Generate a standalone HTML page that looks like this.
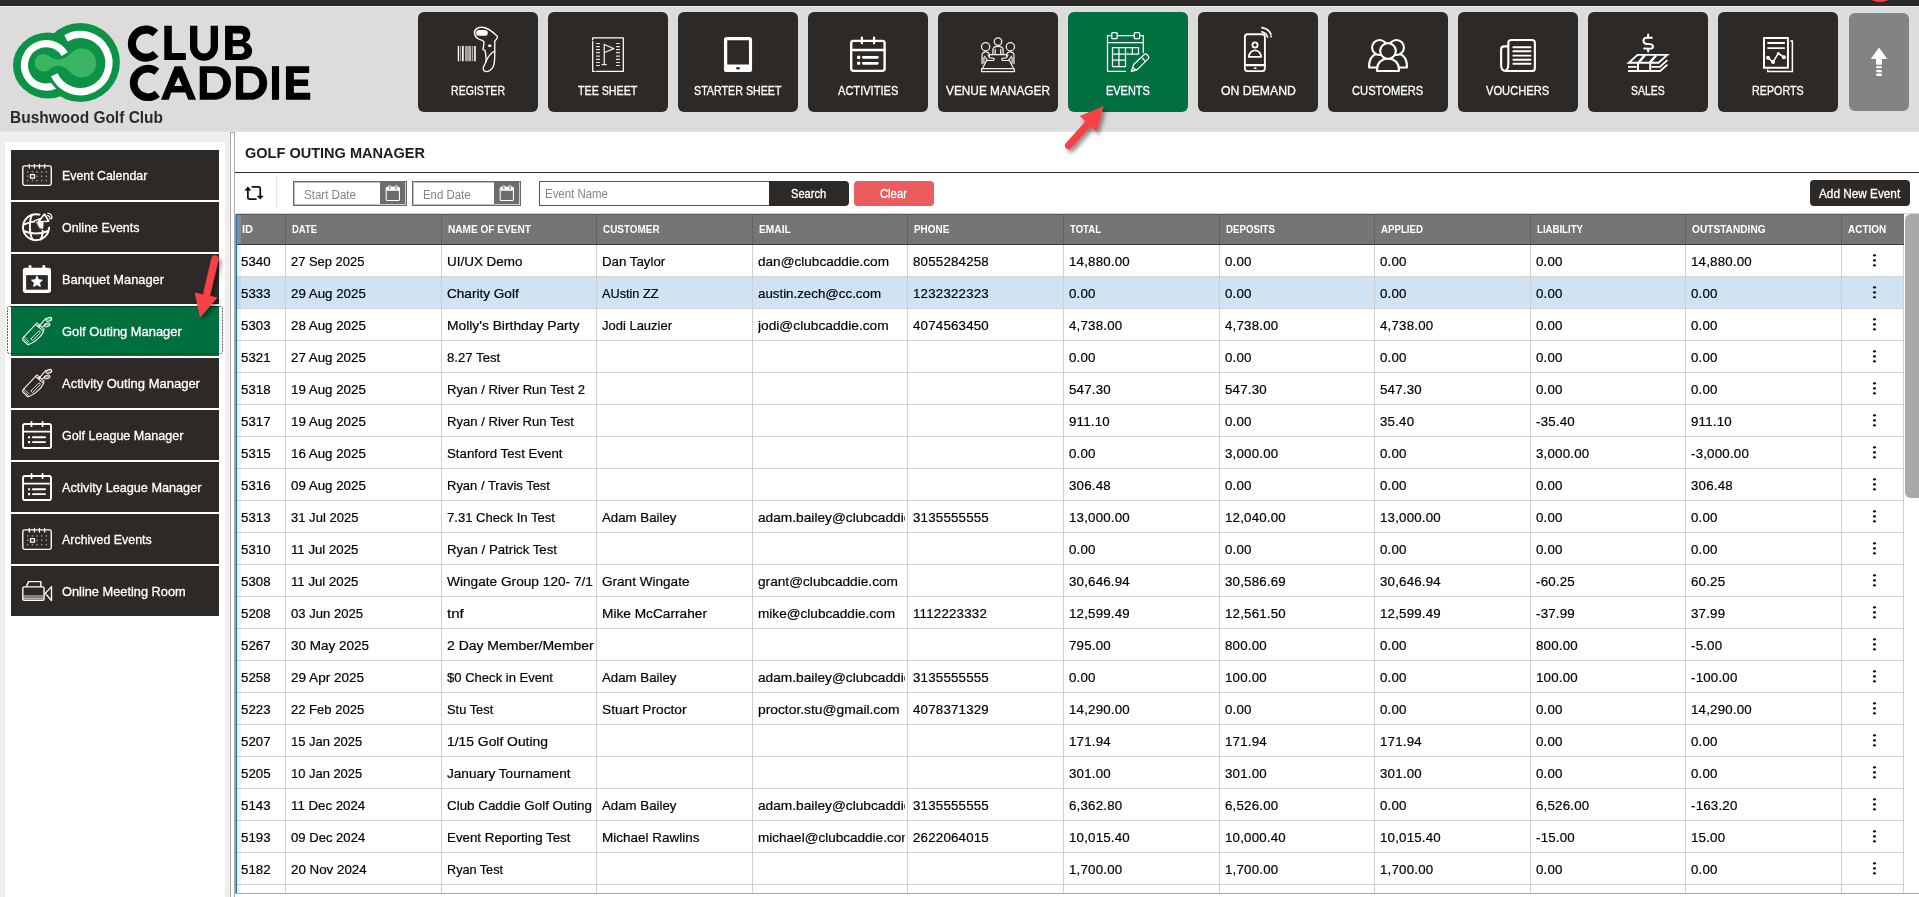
<!DOCTYPE html><html><head><meta charset="utf-8"><title>Golf Outing Manager</title><style>
*{box-sizing:border-box;margin:0;padding:0}
html,body{width:1919px;height:897px;overflow:hidden;background:#fff;font-family:"Liberation Sans",sans-serif;}
body{position:relative}
.abs{position:absolute}
#topbar{left:0;top:0;width:1919px;height:6px;background:#2d2926}
#topline{left:0;top:6px;width:1919px;height:1px;background:#ebebeb}
#hdr{left:0;top:7px;width:1919px;height:125px;background:#dcdcdc}
#reddot{left:1870.2px;top:-8.3px;width:20px;height:10.6px;border-radius:50%;background:#f53b40}
.nb{position:absolute;top:12px;width:120px;height:100px;background:#2d2926;border-radius:6px;color:#fff}
.nb.act{background:#007041}
.nb .lb{position:absolute;left:0;width:120px;top:83px;text-align:center;font-size:12.5px;line-height:14px;white-space:nowrap}
.nb svg{position:absolute}
#upbtn{left:1849px;top:13px;width:60px;height:98px;background:#838383;border-radius:6px}
#club{left:10px;top:108px;font-weight:bold;font-size:14.6px;line-height:18px;color:#2d2926;white-space:nowrap}
#side{left:0;top:132px;width:230px;height:765px;background:#efeeec}
#sidepanel{left:5px;top:142px;width:220px;height:755px;background:#fff}
.si{position:absolute;left:11px;width:208px;height:50px;background:#2d2926;color:#fff}
.si.act{background:#006f3f}
.si .t{position:absolute;left:51px;top:17px;font-size:13px;line-height:16px;white-space:nowrap}
.si svg{position:absolute}

#spl{left:230px;top:132px;width:5px;height:765px;background:#fff;border-left:1px solid #ababab;border-right:1px solid #ababab;border-top:1px solid #ababab}
#title{left:245px;top:143px;font-weight:bold;font-size:14.6px;line-height:18px;color:#1f1b18;white-space:nowrap}
#tline{left:235px;top:172px;width:1684px;height:1px;background:#2d2926}
#tsep{left:276px;top:177px;width:1px;height:30px;background:#e2e2e2}
.inp{position:absolute;height:25px;border:1px solid #686868;background:#fff;box-shadow:inset 0 0 0 1px rgba(104,104,104,0.42)}
.btn{position:absolute}
#tbl{left:235px;top:213px;width:1669px;height:681px}
.hc{position:absolute;top:216px;font-weight:bold;font-size:11px;line-height:14px;color:#fff;white-space:nowrap;height:28px;padding-top:6px}
.row{position:absolute;left:237px;width:1667px;height:32px;border-bottom:1px solid #d6d6d6}
.row.hl{background:#cfe3f3}
.c{position:absolute;top:0;height:31px;font-size:13.3px;line-height:33px;color:#000;-webkit-text-stroke:0.2px #000;white-space:nowrap;overflow:hidden}
.c.tx{letter-spacing:0.15px}
.c.dt{letter-spacing:-0.2px}
.c.nm{letter-spacing:0.05px}
.c.nu{letter-spacing:0.2px}
.vl{position:absolute;top:245px;width:1px;height:648px;background:#d0d0d0}
.hvl{position:absolute;top:215px;width:1px;height:29px;background:#636363}
.dots{position:absolute;left:1872px;width:3px}
.dots i{display:block;width:3px;height:2px;background:#111;border-radius:1px;margin-bottom:3px}
#hdrline{left:0;top:131px;width:1919px;height:1px;background:#e4e4e4}
.calb{top:182px;width:26px;height:23px;background:#6d6d6d;border-right:1px solid #cfcfcf;border-bottom:1px solid #cfcfcf}
.sx{display:inline-block;transform-origin:0 50%;white-space:nowrap}

</style></head><body>
<div class="abs" id="hdr"></div><div class="abs" id="hdrline"></div><div class="abs" id="topbar"></div><div class="abs" id="topline"></div><div class="abs" id="reddot"></div>

<svg class="abs" style="left:0;top:0" width="330" height="132" viewBox="0 0 330 132">
<ellipse cx="48" cy="65.5" rx="35" ry="33" fill="#0c9347"/>
<circle cx="80.4" cy="62.4" r="39.5" fill="#0c9347"/>
<path d="M64.7 54.1 A21.7 21.7 0 1 0 55.5 84.9" fill="none" stroke="#fff" stroke-width="7.2"/>
<path d="M68.2 37.1 A28.6 28.6 0 1 1 54.3 74.8" fill="none" stroke="#0c9347" stroke-width="13.5"/>
<path d="M66.0 38.3 A28.6 28.6 0 1 1 54.3 74.8" fill="none" stroke="#fff" stroke-width="7.3"/>
<circle cx="43.4" cy="62.7" r="8.8" fill="#3bb563"/>
<circle cx="81.7" cy="62.9" r="14.5" fill="#3bb563"/>
<path d="M48 55.2 Q53 59.5 58.9 59.6 Q64 59.5 70.5 53.5 L70.5 72.3 Q64 66 58.9 65.8 Q53 66 48 70.2 Z" fill="#3bb563"/>
<g transform="translate(120 18) scale(0.104221)" fill="#000">
<path d="M340 147 A135 135 0 1 0 343 343" fill="none" stroke="#000" stroke-width="77"/>
<path d="M425 75 L497 75 L497 335 L632 335 L632 403 L425 403 Z"/>
<path d="M707 75 L707 276 A99 99 0 0 0 905 276 L905 75" fill="none" stroke="#000" stroke-width="70"/>
<path fill-rule="evenodd" d="M1008 75 L1160 75 C1215 75 1250 110 1250 160 C1250 195 1230 222 1200 235 C1245 248 1268 280 1268 315 C1268 370 1225 403 1165 403 L1008 403 Z M1082 148 L1150 148 C1170 148 1182 160 1182 179 C1182 198 1170 210 1150 210 L1082 210 Z M1082 272 L1160 272 C1182 272 1195 288 1195 308 C1195 330 1182 345 1160 345 L1082 345 Z"/>
<path d="M353.6 516.1 A137 137 0 1 0 358.4 726.9" fill="none" stroke="#000" stroke-width="74"/>
<path fill-rule="evenodd" d="M525 462 L597 462 L730 785 L655 785 L628 715 L492 715 L468 785 L393 785 Z M560 565 L597 652 L520 652 Z"/>
<path fill-rule="evenodd" d="M765 462 L900 462 C1000 462 1065 530 1065 623 C1065 717 1000 785 900 785 L765 785 Z M835 528 L895 528 C955 528 990 568 990 623 C990 680 955 718 895 718 L835 718 Z"/>
<path fill-rule="evenodd" transform="translate(347 0)" d="M765 462 L900 462 C1000 462 1065 530 1065 623 C1065 717 1000 785 900 785 L765 785 Z M835 528 L895 528 C955 528 990 568 990 623 C990 680 955 718 895 718 L835 718 Z"/>
<rect x="1458" y="462" width="68" height="323"/>
<path d="M1592 462 L1815 462 L1815 528 L1668 528 L1668 590 L1805 590 L1805 652 L1668 652 L1668 718 L1825 718 L1825 785 L1592 785 Z"/>
</g>
</svg>

<div id="club" style="position:absolute;left:10.40px;top:107.86px;font-size:16.00px;line-height:20px;height:20px;white-space:nowrap;color:#2d2926;transform-origin:0 0;transform:scaleX(0.9672);font-weight:bold;">Bushwood Golf Club</div>
<div class="nb" style="left:418px"><svg style="left:0;top:8px" width="120" height="56" viewBox="0 0 1920 896" fill="none" stroke="#fff" stroke-linecap="round" stroke-linejoin="round" >
<g stroke="none">
<rect x="636" y="415" width="22" height="245" fill="#fff"/>
<rect x="672" y="415" width="14" height="245" fill="#a9a7a5"/>
<rect x="703" y="415" width="28" height="245" fill="#fff"/>
<rect x="752" y="415" width="44" height="245" fill="#a9a7a5"/>
<rect x="796" y="415" width="14" height="245" fill="#c9c7c5"/>
<rect x="812" y="415" width="36" height="245" fill="#b5b3b1"/>
<rect x="860" y="415" width="20" height="245" fill="#a9a7a5"/>
<rect x="894" y="415" width="34" height="245" fill="#d5d3d1"/>
</g>
<path stroke-width="22" d="M905 215 C895 150 950 118 1010 116 C1100 114 1180 170 1270 262 C1282 278 1262 300 1228 340 L1228 500 C1230 600 1225 690 1205 745 C1180 800 1120 830 1085 826 C1040 815 1030 770 1060 725 C1085 690 1095 650 1090 620 L1075 492 L1040 470 C1050 420 1062 380 1052 345 C1040 318 1000 322 960 300 C930 282 910 255 905 215 Z"/>
<path stroke-width="20" d="M1222 500 C1150 540 1110 610 1088 665"/>
<rect x="930" y="160" width="186" height="92" rx="46" fill="#fff" stroke="none"/>
<ellipse cx="1148" cy="412" rx="30" ry="19" fill="#fff" stroke="none"/>
</svg><div id="nl0" style="position:absolute;left:32.95px;top:69.33px;font-size:12.90px;line-height:20px;height:20px;white-space:nowrap;color:#fff;transform-origin:0 0;transform:scaleX(0.8204);-webkit-text-stroke:0.30px #fff;">REGISTER</div></div>
<div class="nb" style="left:548px"><svg style="left:0;top:8px" width="120" height="56" viewBox="0 0 1920 896" fill="none" stroke="#fff" stroke-linecap="round" stroke-linejoin="round" >
<path stroke-width="20" d="M715 315 L715 285 L1205 285 L1205 822 L770 822 M745 822 L715 822 L715 342"/>
<g stroke-width="18" stroke="#e6e4e2">
<path d="M776 375 L824 375 M1096 375 L1144 375"/><path d="M776 425 L824 425 M1096 425 L1144 425"/><path d="M776 473 L824 473 M1096 473 L1144 473"/><path d="M776 522 L824 522 M1096 522 L1144 522"/><path d="M776 577 L824 577 M1096 577 L1144 577"/><path d="M776 630 L824 630 M1096 630 L1144 630"/><path d="M776 680 L824 680 M1096 680 L1144 680"/><path d="M776 728 L824 728 M1096 728 L1144 728"/>
</g>
<path stroke-width="20" stroke="#f0eeec" d="M900 388 L900 708 M866 712 L934 712 M902 392 L1052 458 L906 520"/>
</svg><div id="nl1" style="position:absolute;left:30.30px;top:69.33px;font-size:12.90px;line-height:20px;height:20px;white-space:nowrap;color:#fff;transform-origin:0 0;transform:scaleX(0.8286);-webkit-text-stroke:0.30px #fff;">TEE SHEET</div></div>
<div class="nb" style="left:678px"><svg style="left:0;top:8px" width="120" height="56" viewBox="0 0 1920 896" fill="none" stroke="#fff" stroke-linecap="round" stroke-linejoin="round" >
<rect x="735" y="270" width="450" height="562" rx="42" fill="#fff" stroke="none"/>
<rect x="788" y="322" width="347" height="390" rx="8" fill="#2d2926" stroke="none"/>
<ellipse cx="960" cy="773" rx="30" ry="20" fill="#2d2926" stroke="none"/>
</svg><div id="nl2" style="position:absolute;left:16.20px;top:69.33px;font-size:12.90px;line-height:20px;height:20px;white-space:nowrap;color:#fff;transform-origin:0 0;transform:scaleX(0.8294);-webkit-text-stroke:0.30px #fff;">STARTER SHEET</div></div>
<div class="nb" style="left:808px"><svg style="left:0;top:8px" width="120" height="56" viewBox="0 0 1920 896" fill="none" stroke="#fff" stroke-linecap="round" stroke-linejoin="round" >
<rect x="691" y="334" width="535" height="479" rx="36" stroke-width="38"/>
<path stroke-width="38" d="M691 480 L1226 480"/>
<path stroke-width="36" d="M862 282 L862 372 M1057 282 L1057 372"/>
<rect x="785" y="572" width="50" height="50" rx="6" fill="#fff" stroke="none"/>
<rect x="785" y="667" width="50" height="50" rx="6" fill="#fff" stroke="none"/>
<path stroke-width="44" d="M885 597 L1110 597 M885 692 L1110 692"/>
</svg><div id="nl3" style="position:absolute;left:29.85px;top:69.33px;font-size:12.90px;line-height:20px;height:20px;white-space:nowrap;color:#fff;transform-origin:0 0;transform:scaleX(0.8585);-webkit-text-stroke:0.30px #fff;">ACTIVITIES</div></div>
<div class="nb" style="left:938px"><svg style="left:0;top:8px" width="120" height="56" viewBox="0 0 1920 896" fill="none" stroke="#fff" stroke-linecap="round" stroke-linejoin="round" >
<g stroke-width="20" stroke="#f2f0ee">
<circle cx="960" cy="345" r="60"/>
<circle cx="762" cy="428" r="66"/>
<circle cx="1158" cy="428" r="66"/>
<path d="M878 545 L878 478 C878 440 905 420 960 420 C1015 420 1042 440 1042 478 L1042 545"/>
<path d="M915 545 L915 470 M1003 545 L1003 470"/>
<path d="M830 552 L1090 552 L1105 585 M830 552 L815 585"/>
<path d="M780 645 L697 800 L697 826 L1223 826 L1223 800 L1140 645"/>
<path d="M700 778 L1220 778"/>
<path d="M705 700 L705 560 C705 520 730 508 770 508 C800 508 812 525 825 552"/>
<path d="M1215 700 L1215 560 C1215 520 1190 508 1150 508 C1120 508 1108 525 1095 552"/>
<path d="M745 580 L790 645 L880 648 C905 648 905 610 880 610 L830 608 L800 560"/>
<path d="M1175 580 L1130 645 L1040 648 C1015 648 1015 610 1040 610 L1090 608 L1120 560"/>
<path d="M735 600 L735 690 M1185 600 L1185 690"/>
</g>
</svg><div id="nl4" style="position:absolute;left:8.00px;top:69.33px;font-size:12.90px;line-height:20px;height:20px;white-space:nowrap;color:#fff;transform-origin:0 0;transform:scaleX(0.9183);-webkit-text-stroke:0.30px #fff;">VENUE MANAGER</div></div>
<div class="nb act" style="left:1068px"><svg style="left:0;top:8px" width="120" height="56" viewBox="0 0 1920 896" fill="none" stroke="#fff" stroke-linecap="round" stroke-linejoin="round" >
<g stroke-width="20">
<path d="M920 822 L632 822 L632 248 L1205 248 L1205 520"/>
<path d="M632 362 L1205 362"/>
<rect x="700" y="200" width="86" height="96" rx="14" fill="#007041"/>
<rect x="1060" y="200" width="86" height="96" rx="14" fill="#007041"/>
<path d="M712 440 L1128 440 L1128 545 L920 545 L920 745 L712 745 Z"/>
<path d="M815 440 L815 745 M920 440 L920 545 M1030 440 L1030 545 M712 545 L920 545 M712 640 L920 640"/>
<path d="M1050 712 L1222 552 C1235 540 1250 540 1262 552 L1285 578 C1297 592 1297 605 1285 618 L1112 790 L1012 826 Z"/>
<path d="M1185 605 L1240 662 M1032 762 L1090 800"/>
</g>
</svg><div id="nl5" style="position:absolute;left:38.10px;top:69.33px;font-size:12.90px;line-height:20px;height:20px;white-space:nowrap;color:#fff;transform-origin:0 0;transform:scaleX(0.8486);-webkit-text-stroke:0.30px #fff;">EVENTS</div></div>
<div class="nb" style="left:1198px"><svg style="left:0;top:8px" width="120" height="56" viewBox="0 0 1920 896" fill="none" stroke="#fff" stroke-linecap="round" stroke-linejoin="round" >
<rect x="750" y="228" width="320" height="590" rx="42" stroke-width="30"/>
<path stroke-width="36" d="M752 720 L1068 720"/>
<ellipse cx="915" cy="770" rx="24" ry="14" fill="#fff" stroke="none"/>
<circle cx="912" cy="398" r="42" stroke-width="28"/>
<path stroke-width="28" d="M812 590 C820 520 870 485 912 485 C955 485 1002 520 1010 590 Z"/>
<path stroke-width="26" d="M1022 188 C1070 200 1105 235 1112 275"/>
<path stroke-width="26" d="M1022 122 C1095 135 1150 180 1168 235"/>
<circle cx="1168" cy="266" r="15" fill="#fff" stroke="none"/>
</svg><div id="nl6" style="position:absolute;left:22.50px;top:69.33px;font-size:12.90px;line-height:20px;height:20px;white-space:nowrap;color:#fff;transform-origin:0 0;transform:scaleX(0.9514);-webkit-text-stroke:0.30px #fff;">ON DEMAND</div></div>
<div class="nb" style="left:1328px"><svg style="left:0;top:8px" width="120" height="56" viewBox="0 0 1920 896" fill="none" stroke="#fff" stroke-linecap="round" stroke-linejoin="round" >
<g stroke-width="34" fill="#2d2926">
<path d="M785 760 L657 760 L657 740 C657 640 700 575 758 548" fill="none"/>
<path d="M1135 760 L1263 760 L1263 740 C1263 640 1220 575 1162 548" fill="none"/>
<circle cx="825" cy="440" r="120"/>
<circle cx="1095" cy="440" r="120"/>
<path d="M785 815 L785 785 C785 690 860 615 960 615 C1060 615 1135 690 1135 785 L1135 815 Z"/>
<circle cx="960" cy="495" r="125"/>
</g>
</svg><div id="nl7" style="position:absolute;left:24.35px;top:69.33px;font-size:12.90px;line-height:20px;height:20px;white-space:nowrap;color:#fff;transform-origin:0 0;transform:scaleX(0.8675);-webkit-text-stroke:0.30px #fff;">CUSTOMERS</div></div>
<div class="nb" style="left:1458px"><svg style="left:0;top:8px" width="120" height="56" viewBox="0 0 1920 896" fill="none" stroke="#fff" stroke-linecap="round" stroke-linejoin="round" >
<g stroke-width="34">
<path d="M805 430 L805 365 C805 335 825 320 855 320 L1180 320 C1210 320 1230 335 1230 365 L1230 770 C1230 800 1210 815 1180 815 L760 815 C715 815 690 780 690 720 L690 470 C690 440 710 422 740 422 L805 422 L805 700 C805 760 790 800 760 812"/>
</g>
<path stroke-width="30" d="M885 435 L1160 435 M885 500 L1160 500 M885 570 L1160 570 M885 635 L1160 635 M885 700 L1160 700"/>
</svg><div id="nl8" style="position:absolute;left:28.40px;top:69.33px;font-size:12.90px;line-height:20px;height:20px;white-space:nowrap;color:#fff;transform-origin:0 0;transform:scaleX(0.8644);-webkit-text-stroke:0.30px #fff;">VOUCHERS</div></div>
<div class="nb" style="left:1588px"><svg style="left:0;top:8px" width="120" height="56" viewBox="0 0 1920 896" fill="none" stroke="#fff" stroke-linecap="round" stroke-linejoin="round" >
<path stroke-width="32" d="M1022 282 L940 282 C905 282 888 305 888 332 C888 362 910 382 945 384 L985 386 C1020 388 1040 405 1040 428 C1040 452 1020 458 990 458 L900 455 M962 230 L962 280 M962 462 L962 505"/>
<g stroke-width="30" stroke-linecap="butt" stroke-linejoin="miter">
<path d="M792 558 L1268 558 L1128 684 L652 684 Z"/>
<path stroke-width="38" d="M910 565 L812 678 M1092 565 L992 678"/>
<path d="M640 750 L780 750 M1015 750 L1150 750 L1270 642"/>
<path d="M640 816 L1155 816 L1270 714"/>
<path stroke-width="32" d="M800 690 L800 812 M995 690 L995 812"/>
</g>
</svg><div id="nl9" style="position:absolute;left:43.10px;top:69.33px;font-size:12.90px;line-height:20px;height:20px;white-space:nowrap;color:#fff;transform-origin:0 0;transform:scaleX(0.8127);-webkit-text-stroke:0.30px #fff;">SALES</div></div>
<div class="nb" style="left:1718px"><svg style="left:0;top:8px" width="120" height="56" viewBox="0 0 1920 896" fill="none" stroke="#fff" stroke-linecap="round" stroke-linejoin="round" >
<g stroke-linecap="butt" stroke-linejoin="miter">
<rect x="736" y="288" width="383" height="476" stroke-width="32"/>
<path stroke-width="24" d="M1155 336 L1190 336 L1190 822 L795 822 L795 792"/>
<path stroke-width="30" d="M790 368 L1070 368 M790 450 L1070 450"/>
</g>
<path stroke-width="24" d="M800 605 L880 672 L965 535 L1055 595"/>
<circle cx="800" cy="605" r="32" fill="#fff" stroke="none"/>
<circle cx="880" cy="672" r="32" fill="#fff" stroke="none"/>
<circle cx="1055" cy="595" r="32" fill="#fff" stroke="none"/>
<circle cx="965" cy="535" r="24" fill="#fff" stroke="none"/>
</svg><div id="nl10" style="position:absolute;left:34.15px;top:69.33px;font-size:12.90px;line-height:20px;height:20px;white-space:nowrap;color:#fff;transform-origin:0 0;transform:scaleX(0.8322);-webkit-text-stroke:0.30px #fff;">REPORTS</div></div>
<div class="abs" id="upbtn"></div><svg class="abs" style="left:1869px;top:46px" width="20" height="32" viewBox="0 0 20 32"><path fill="#fff" d="M10 1.5 L18.3 13 L13 13 L13 18.8 L7 18.8 L7 13 L1.7 13 Z"/><rect x="7.2" y="20" width="5.6" height="2.2" rx="0.6" fill="#fff"/><rect x="7.2" y="24" width="5.6" height="2.2" rx="0.6" fill="#fff"/><rect x="7.2" y="27.6" width="5.6" height="2.4" rx="0.8" fill="#fff"/></svg>
<div class="abs" id="side"></div><div class="abs" id="sidepanel"></div><div class="abs" id="spl"></div>
<div class="si" style="top:150px"><svg style="left:0;top:-2px" width="120" height="56" viewBox="0 0 1920 896" fill="none" stroke="#fff" stroke-linecap="round" stroke-linejoin="round">
<rect x="189" y="286" width="455" height="311" rx="28" stroke-width="22"/>
<path stroke-width="20" d="M293 262 L293 320 M375 262 L375 320 M455 262 L455 320 M538 262 L538 320"/>
<rect x="257" y="371" width="22" height="24" fill="#9d9b99" stroke="none"/><rect x="332" y="371" width="22" height="24" fill="#9d9b99" stroke="none"/><rect x="404" y="371" width="22" height="24" fill="#9d9b99" stroke="none"/><rect x="479" y="371" width="22" height="24" fill="#9d9b99" stroke="none"/><rect x="554" y="371" width="22" height="24" fill="#9d9b99" stroke="none"/><rect x="257" y="440" width="22" height="24" fill="#9d9b99" stroke="none"/><rect x="332" y="440" width="22" height="24" fill="#9d9b99" stroke="none"/><rect x="404" y="440" width="22" height="24" fill="#9d9b99" stroke="none"/><rect x="479" y="440" width="22" height="24" fill="#9d9b99" stroke="none"/><rect x="554" y="440" width="22" height="24" fill="#9d9b99" stroke="none"/><rect x="257" y="510" width="22" height="24" fill="#9d9b99" stroke="none"/><rect x="332" y="510" width="22" height="24" fill="#9d9b99" stroke="none"/><rect x="404" y="510" width="22" height="24" fill="#9d9b99" stroke="none"/><rect x="479" y="510" width="22" height="24" fill="#9d9b99" stroke="none"/><rect x="554" y="510" width="22" height="24" fill="#9d9b99" stroke="none"/>
<rect x="312" y="424" width="64" height="58" fill="#2d2926" stroke-width="20"/>
</svg><div id="st0" style="position:absolute;left:51.20px;top:15.96px;font-size:13.10px;line-height:20px;height:20px;white-space:nowrap;color:#fff;transform-origin:0 0;transform:scaleX(0.9446);-webkit-text-stroke:0.30px #fff;">Event Calendar</div></div>
<div class="si" style="top:202px"><svg style="left:0;top:-2px" width="120" height="56" viewBox="0 0 1920 896" fill="none" stroke="#fff" stroke-linecap="round" stroke-linejoin="round">
<g stroke-width="31">
<circle cx="400" cy="435" r="208"/>
<path d="M335 238 C290 330 290 540 345 632"/>
<path d="M475 632 C500 580 512 500 500 440"/>
<path d="M205 395 C300 345 420 340 470 345"/>
<path d="M215 500 C330 545 470 545 585 500"/>
</g>
<path d="M380 330 L520 180 L700 200 L700 330 L620 420 L540 480 L420 470 Z" fill="#2d2926" stroke="none"/>
<path stroke-width="26" d="M440 348 L536 224 L602 340 Z"/>
<path d="M410 352 L515 358 L512 455 L462 450 Z" fill="#fff" stroke="#fff" stroke-width="8"/>
<path d="M470 300 L380 330" stroke-width="24"/>
<path stroke-width="20" d="M585 250 C615 255 630 280 622 305"/>
<path stroke-width="20" d="M590 212 C640 215 665 255 648 300"/>
</svg><div id="st1" style="position:absolute;left:51.20px;top:15.96px;font-size:13.10px;line-height:20px;height:20px;white-space:nowrap;color:#fff;transform-origin:0 0;transform:scaleX(0.9502);-webkit-text-stroke:0.30px #fff;">Online Events</div></div>
<div class="si" style="top:254px"><svg style="left:0;top:-2px" width="120" height="56" viewBox="0 0 1920 896" fill="none" stroke="#fff" stroke-linecap="round" stroke-linejoin="round">
<rect x="190" y="250" width="450" height="405" rx="42" fill="#fff" stroke="none"/>
<path stroke-width="46" d="M305 232 L305 270 M525 232 L525 270"/>
<rect x="242" y="370" width="348" height="233" fill="#2d2926" stroke="none"/>
<polygon points="415,386 441,442 502,450 457,492 469,552 415,522 361,552 373,492 328,450 389,442" fill="#fff" stroke="#fff" stroke-width="14"/>
</svg><div id="st2" style="position:absolute;left:51.20px;top:15.96px;font-size:13.10px;line-height:20px;height:20px;white-space:nowrap;color:#fff;transform-origin:0 0;transform:scaleX(0.9794);-webkit-text-stroke:0.30px #fff;">Banquet Manager</div></div>
<div class="si act" style="top:306px"><svg style="left:0;top:-2px" width="120" height="56" viewBox="0 0 1920 896" fill="none" stroke="#fff" stroke-linecap="round" stroke-linejoin="round">
<g stroke-width="17" stroke="#f6f6f4">
<path d="M195 538 L415 303 L528 402 C522 480 410 600 300 642 L268 652 L183 570 Z"/>
<path d="M208 524 L290 606 M198 553 L275 628" stroke-width="13"/>
<path d="M393 328 L508 426"/>
<path d="M325 552 L440 436 C455 422 478 445 465 460 L352 580 C338 594 312 566 325 552 Z" stroke-width="14"/>
<path d="M470 330 L558 230"/>
<ellipse cx="606" cy="246" rx="48" ry="29" transform="rotate(-18 606 246)"/>
<ellipse cx="606" cy="246" rx="26" ry="12" transform="rotate(-18 606 246)" stroke-width="10" stroke="#bfe0cf"/>
<path d="M505 368 L548 322"/>
<ellipse cx="578" cy="336" rx="46" ry="27" transform="rotate(-18 578 336)"/>
<ellipse cx="578" cy="336" rx="24" ry="11" transform="rotate(-18 578 336)" stroke-width="10" stroke="#bfe0cf"/>
<rect x="438" y="332" width="32" height="32" fill="#fff" stroke="none" transform="rotate(-45 454 348)"/>
</g>
</svg><div id="st3" style="position:absolute;left:51.20px;top:15.96px;font-size:13.10px;line-height:20px;height:20px;white-space:nowrap;color:#fff;transform-origin:0 0;transform:scaleX(0.9851);-webkit-text-stroke:0.30px #fff;">Golf Outing Manager</div></div>
<div class="si" style="top:358px"><svg style="left:0;top:-2px" width="120" height="56" viewBox="0 0 1920 896" fill="none" stroke="#fff" stroke-linecap="round" stroke-linejoin="round">
<g stroke-width="17" stroke="#f6f6f4">
<path d="M195 538 L415 303 L528 402 C522 480 410 600 300 642 L268 652 L183 570 Z"/>
<path d="M208 524 L290 606 M198 553 L275 628" stroke-width="13"/>
<path d="M393 328 L508 426"/>
<path d="M325 552 L440 436 C455 422 478 445 465 460 L352 580 C338 594 312 566 325 552 Z" stroke-width="14"/>
<path d="M470 330 L558 230"/>
<ellipse cx="606" cy="246" rx="48" ry="29" transform="rotate(-18 606 246)"/>
<ellipse cx="606" cy="246" rx="26" ry="12" transform="rotate(-18 606 246)" stroke-width="10" stroke="#cbc9c7"/>
<path d="M505 368 L548 322"/>
<ellipse cx="578" cy="336" rx="46" ry="27" transform="rotate(-18 578 336)"/>
<ellipse cx="578" cy="336" rx="24" ry="11" transform="rotate(-18 578 336)" stroke-width="10" stroke="#cbc9c7"/>
<rect x="438" y="332" width="32" height="32" fill="#fff" stroke="none" transform="rotate(-45 454 348)"/>
</g>
</svg><div id="st4" style="position:absolute;left:51.20px;top:15.96px;font-size:13.10px;line-height:20px;height:20px;white-space:nowrap;color:#fff;transform-origin:0 0;transform:scaleX(0.9923);-webkit-text-stroke:0.30px #fff;">Activity Outing Manager</div></div>
<div class="si" style="top:410px"><svg style="left:0;top:-2px" width="120" height="56" viewBox="0 0 1920 896" fill="none" stroke="#fff" stroke-linecap="round" stroke-linejoin="round">
<rect x="193" y="255" width="447" height="385" rx="30" stroke-width="30"/>
<path stroke-width="30" d="M193 378 L640 378"/>
<path stroke-width="28" d="M328 220 L328 290 M505 220 L505 290"/>
<rect x="272" y="450" width="34" height="34" rx="5" fill="#fff" stroke="none"/>
<rect x="272" y="528" width="34" height="34" rx="5" fill="#fff" stroke="none"/>
<path stroke-width="30" d="M350 467 L545 467 M350 545 L545 545"/>
</svg><div id="st5" style="position:absolute;left:51.20px;top:15.96px;font-size:13.10px;line-height:20px;height:20px;white-space:nowrap;color:#fff;transform-origin:0 0;transform:scaleX(0.9580);-webkit-text-stroke:0.30px #fff;">Golf League Manager</div></div>
<div class="si" style="top:462px"><svg style="left:0;top:-2px" width="120" height="56" viewBox="0 0 1920 896" fill="none" stroke="#fff" stroke-linecap="round" stroke-linejoin="round">
<rect x="193" y="255" width="447" height="385" rx="30" stroke-width="30"/>
<path stroke-width="30" d="M193 378 L640 378"/>
<path stroke-width="28" d="M328 220 L328 290 M505 220 L505 290"/>
<rect x="272" y="450" width="34" height="34" rx="5" fill="#fff" stroke="none"/>
<rect x="272" y="528" width="34" height="34" rx="5" fill="#fff" stroke="none"/>
<path stroke-width="30" d="M350 467 L545 467 M350 545 L545 545"/>
</svg><div id="st6" style="position:absolute;left:51.20px;top:15.96px;font-size:13.10px;line-height:20px;height:20px;white-space:nowrap;color:#fff;transform-origin:0 0;transform:scaleX(0.9675);-webkit-text-stroke:0.30px #fff;">Activity League Manager</div></div>
<div class="si" style="top:514px"><svg style="left:0;top:-2px" width="120" height="56" viewBox="0 0 1920 896" fill="none" stroke="#fff" stroke-linecap="round" stroke-linejoin="round">
<rect x="189" y="286" width="455" height="311" rx="28" stroke-width="22"/>
<path stroke-width="20" d="M293 262 L293 320 M375 262 L375 320 M455 262 L455 320 M538 262 L538 320"/>
<rect x="257" y="371" width="22" height="24" fill="#9d9b99" stroke="none"/><rect x="332" y="371" width="22" height="24" fill="#9d9b99" stroke="none"/><rect x="404" y="371" width="22" height="24" fill="#9d9b99" stroke="none"/><rect x="479" y="371" width="22" height="24" fill="#9d9b99" stroke="none"/><rect x="554" y="371" width="22" height="24" fill="#9d9b99" stroke="none"/><rect x="257" y="440" width="22" height="24" fill="#9d9b99" stroke="none"/><rect x="332" y="440" width="22" height="24" fill="#9d9b99" stroke="none"/><rect x="404" y="440" width="22" height="24" fill="#9d9b99" stroke="none"/><rect x="479" y="440" width="22" height="24" fill="#9d9b99" stroke="none"/><rect x="554" y="440" width="22" height="24" fill="#9d9b99" stroke="none"/><rect x="257" y="510" width="22" height="24" fill="#9d9b99" stroke="none"/><rect x="332" y="510" width="22" height="24" fill="#9d9b99" stroke="none"/><rect x="404" y="510" width="22" height="24" fill="#9d9b99" stroke="none"/><rect x="479" y="510" width="22" height="24" fill="#9d9b99" stroke="none"/><rect x="554" y="510" width="22" height="24" fill="#9d9b99" stroke="none"/>
<rect x="312" y="424" width="64" height="58" fill="#2d2926" stroke-width="20"/>
</svg><div id="st7" style="position:absolute;left:51.20px;top:15.96px;font-size:13.10px;line-height:20px;height:20px;white-space:nowrap;color:#fff;transform-origin:0 0;transform:scaleX(0.9487);-webkit-text-stroke:0.30px #fff;">Archived Events</div></div>
<div class="si" style="top:566px"><svg style="left:0;top:-2px" width="120" height="56" viewBox="0 0 1920 896" fill="none" stroke="#fff" stroke-linecap="round" stroke-linejoin="round">
<g stroke-width="22">
<rect x="189" y="366" width="340" height="213" rx="24"/>
<path d="M195 512 L525 512 M195 545 L525 545" stroke="#d8d6d4" stroke-width="18"/>
<path d="M248 355 L280 282 L478 282 L478 355"/>
<path d="M548 470 L648 362 L648 583 Z"/>
</g>
</svg><div id="st8" style="position:absolute;left:51.20px;top:15.96px;font-size:13.10px;line-height:20px;height:20px;white-space:nowrap;color:#fff;transform-origin:0 0;transform:scaleX(0.9772);-webkit-text-stroke:0.30px #fff;">Online Meeting Room</div></div>
<svg class="abs" style="left:0;top:300px" width="230" height="60" viewBox="0 300 230 60"><rect x="7.5" y="306.5" width="215" height="47" rx="2" fill="none" stroke="rgba(0,0,0,0.68)" stroke-width="1" stroke-dasharray="1.8 1.2"/></svg>

<div id="title" style="position:absolute;left:245.40px;top:143.03px;font-size:15.50px;line-height:20px;height:20px;white-space:nowrap;color:#1f1b18;transform-origin:0 0;transform:scaleX(0.9374);font-weight:bold;">GOLF OUTING MANAGER</div>
<div class="abs" id="tline"></div>
<div class="abs" id="tsep"></div>
<svg class="abs" style="left:236px;top:172px" width="60" height="42" viewBox="0 0 960 672" fill="none" stroke="#111" stroke-width="28" stroke-linejoin="round" stroke-linecap="butt"><path d="M190 285 L190 405 Q190 435 220 435 L330 435"/><path d="M250 236 L358 236 Q388 236 388 266 L388 390"/><path d="M190 236 L238 292 L142 292 Z" fill="#111" stroke-width="8"/><path d="M388 436 L340 384 L436 384 Z" fill="#111" stroke-width="8"/></svg>
<div class="inp" style="left:293px;top:181px;width:114px"></div><div id="i1" style="position:absolute;left:303.80px;top:185.14px;font-size:12.30px;line-height:20px;height:20px;white-space:nowrap;color:#838383;transform-origin:0 0;transform:scaleX(0.9391);">Start Date</div>
<div class="abs calb" style="left:380px"></div><svg style="position:absolute;left:380px;top:183px" width="26" height="22" viewBox="0 0 416 352" fill="none" stroke="#fff"><rect x="99" y="68" width="212" height="212" rx="22" stroke-width="17"/><rect x="99" y="60" width="212" height="62" rx="20" fill="#fff" stroke="none"/><rect x="140" y="40" width="32" height="62" rx="8" fill="#8a8a8a" stroke="#fff" stroke-width="10"/><rect x="240" y="40" width="32" height="62" rx="8" fill="#8a8a8a" stroke="#fff" stroke-width="10"/></svg>
<div class="inp" style="left:412px;top:181px;width:109px"></div><div id="i2" style="position:absolute;left:422.50px;top:185.14px;font-size:12.30px;line-height:20px;height:20px;white-space:nowrap;color:#838383;transform-origin:0 0;transform:scaleX(0.9263);">End Date</div>
<div class="abs calb" style="left:494px"></div><svg style="position:absolute;left:494px;top:183px" width="26" height="22" viewBox="0 0 416 352" fill="none" stroke="#fff"><rect x="99" y="68" width="212" height="212" rx="22" stroke-width="17"/><rect x="99" y="60" width="212" height="62" rx="20" fill="#fff" stroke="none"/><rect x="140" y="40" width="32" height="62" rx="8" fill="#8a8a8a" stroke="#fff" stroke-width="10"/><rect x="240" y="40" width="32" height="62" rx="8" fill="#8a8a8a" stroke="#fff" stroke-width="10"/></svg>
<div class="inp" style="left:539px;top:181px;width:231px;border-color:#555;box-shadow:none"></div><div id="i3" style="position:absolute;left:545.00px;top:184.24px;font-size:12.30px;line-height:20px;height:20px;white-space:nowrap;color:#838383;transform-origin:0 0;transform:scaleX(0.9309);">Event Name</div>
<div class="btn" style="left:769px;top:181px;width:80px;height:25px;background:#2d2926;border-radius:0 4px 4px 0"></div><div id="b1" style="position:absolute;left:791.00px;top:184.21px;font-size:12.10px;line-height:20px;height:20px;white-space:nowrap;color:#fff;transform-origin:0 0;transform:scaleX(0.9209);-webkit-text-stroke:0.30px #fff;">Search</div>
<div class="btn" style="left:854px;top:181px;width:80px;height:25px;background:#eb5c5f;border-radius:4px"></div><div id="b2" style="position:absolute;left:879.80px;top:184.21px;font-size:12.10px;line-height:20px;height:20px;white-space:nowrap;color:#fff;transform-origin:0 0;transform:scaleX(0.9302);-webkit-text-stroke:0.30px #fff;">Clear</div>
<div class="btn" style="left:1810px;top:180px;width:100px;height:26px;background:#2d2926;border-radius:4px"></div><div id="b3" style="position:absolute;left:1819.40px;top:184.11px;font-size:12.10px;line-height:20px;height:20px;white-space:nowrap;color:#fff;transform-origin:0 0;transform:scaleX(0.9736);-webkit-text-stroke:0.30px #fff;">Add New Event</div>

<div class="abs" style="left:237px;top:213px;width:1682px;height:1px;background:#d4d4d4"></div>
<div class="abs" style="left:237px;top:214px;width:1667px;height:31px;background:#757575;border-top:1px solid #565656;border-bottom:1px solid #3b3b3b"></div>
<div class="abs" style="left:237px;top:215px;width:4px;height:29px;background:#8b8b8b"></div>
<div id="h0" style="position:absolute;left:242.20px;top:219.02px;font-size:11.20px;line-height:20px;height:20px;white-space:nowrap;color:#fff;transform-origin:0 0;transform:scaleX(0.9821);font-weight:bold;">ID</div>
<div id="h1" style="position:absolute;left:292.20px;top:219.02px;font-size:11.20px;line-height:20px;height:20px;white-space:nowrap;color:#fff;transform-origin:0 0;transform:scaleX(0.8430);font-weight:bold;">DATE</div>
<div id="h2" style="position:absolute;left:447.60px;top:219.02px;font-size:11.20px;line-height:20px;height:20px;white-space:nowrap;color:#fff;transform-origin:0 0;transform:scaleX(0.9012);font-weight:bold;">NAME OF EVENT</div>
<div id="h3" style="position:absolute;left:603.00px;top:219.02px;font-size:11.20px;line-height:20px;height:20px;white-space:nowrap;color:#fff;transform-origin:0 0;transform:scaleX(0.8875);font-weight:bold;">CUSTOMER</div>
<div id="h4" style="position:absolute;left:758.70px;top:219.02px;font-size:11.20px;line-height:20px;height:20px;white-space:nowrap;color:#fff;transform-origin:0 0;transform:scaleX(0.9127);font-weight:bold;">EMAIL</div>
<div id="h5" style="position:absolute;left:914.20px;top:219.02px;font-size:11.20px;line-height:20px;height:20px;white-space:nowrap;color:#fff;transform-origin:0 0;transform:scaleX(0.8863);font-weight:bold;">PHONE</div>
<div id="h6" style="position:absolute;left:1070.00px;top:219.02px;font-size:11.20px;line-height:20px;height:20px;white-space:nowrap;color:#fff;transform-origin:0 0;transform:scaleX(0.8543);font-weight:bold;">TOTAL</div>
<div id="h7" style="position:absolute;left:1225.50px;top:219.02px;font-size:11.20px;line-height:20px;height:20px;white-space:nowrap;color:#fff;transform-origin:0 0;transform:scaleX(0.8651);font-weight:bold;">DEPOSITS</div>
<div id="h8" style="position:absolute;left:1381.00px;top:219.02px;font-size:11.20px;line-height:20px;height:20px;white-space:nowrap;color:#fff;transform-origin:0 0;transform:scaleX(0.8653);font-weight:bold;">APPLIED</div>
<div id="h9" style="position:absolute;left:1536.90px;top:219.02px;font-size:11.20px;line-height:20px;height:20px;white-space:nowrap;color:#fff;transform-origin:0 0;transform:scaleX(0.8598);font-weight:bold;">LIABILITY</div>
<div id="h10" style="position:absolute;left:1692.20px;top:219.02px;font-size:11.20px;line-height:20px;height:20px;white-space:nowrap;color:#fff;transform-origin:0 0;transform:scaleX(0.9065);font-weight:bold;">OUTSTANDING</div>
<div id="h11" style="position:absolute;left:1848.10px;top:219.02px;font-size:11.20px;line-height:20px;height:20px;white-space:nowrap;color:#fff;transform-origin:0 0;transform:scaleX(0.8898);font-weight:bold;">ACTION</div>
<div class="hvl" style="left:285px"></div>
<div class="hvl" style="left:441px"></div>
<div class="hvl" style="left:596px"></div>
<div class="hvl" style="left:752px"></div>
<div class="hvl" style="left:907px"></div>
<div class="hvl" style="left:1063px"></div>
<div class="hvl" style="left:1219px"></div>
<div class="hvl" style="left:1374px"></div>
<div class="hvl" style="left:1530px"></div>
<div class="hvl" style="left:1685px"></div>
<div class="hvl" style="left:1841px"></div>
<div class="row" style="top:245px"><div class="c" style="left:4px;width:42px">5340</div><div class="c" style="left:54px;width:148px"><span class="sx" style="transform:scaleX(0.9730)">27 Sep 2025</span></div><div class="c" style="left:210px;width:147px"><span class="sx" style="transform:scaleX(1.0115)">UI/UX Demo</span></div><div class="c" style="left:365px;width:148px"><span class="sx" style="transform:scaleX(0.9987)">Dan Taylor</span></div><div class="c" style="left:521px;width:147px"><span class="sx" style="transform:scaleX(1.0226)">dan@clubcaddie.com</span></div><div class="c nu" style="left:676px;width:148px">8055284258</div><div class="c nu" style="left:832px;width:148px">14,880.00</div><div class="c nu" style="left:988px;width:147px">0.00</div><div class="c nu" style="left:1143px;width:148px">0.00</div><div class="c nu" style="left:1299px;width:147px">0.00</div><div class="c nu" style="left:1454px;width:148px">14,880.00</div></div>
<div class="row hl" style="top:277px"><div class="c" style="left:4px;width:42px">5333</div><div class="c" style="left:54px;width:148px"><span class="sx" style="transform:scaleX(1.0013)">29 Aug 2025</span></div><div class="c" style="left:210px;width:147px"><span class="sx" style="transform:scaleX(1.0215)">Charity Golf</span></div><div class="c" style="left:365px;width:148px"><span class="sx" style="transform:scaleX(0.9557)">AUstin ZZ</span></div><div class="c" style="left:521px;width:147px"><span class="sx" style="transform:scaleX(1.0008)">austin.zech@cc.com</span></div><div class="c nu" style="left:676px;width:148px">1232322323</div><div class="c nu" style="left:832px;width:148px">0.00</div><div class="c nu" style="left:988px;width:147px">0.00</div><div class="c nu" style="left:1143px;width:148px">0.00</div><div class="c nu" style="left:1299px;width:147px">0.00</div><div class="c nu" style="left:1454px;width:148px">0.00</div></div>
<div class="row" style="top:309px"><div class="c" style="left:4px;width:42px">5303</div><div class="c" style="left:54px;width:148px"><span class="sx" style="transform:scaleX(1.0013)">28 Aug 2025</span></div><div class="c" style="left:210px;width:147px"><span class="sx" style="transform:scaleX(1.0396)">Molly&#x27;s Birthday Party</span></div><div class="c" style="left:365px;width:148px"><span class="sx" style="transform:scaleX(0.9761)">Jodi Lauzier</span></div><div class="c" style="left:521px;width:147px"><span class="sx" style="transform:scaleX(1.0319)">jodi@clubcaddie.com</span></div><div class="c nu" style="left:676px;width:148px">4074563450</div><div class="c nu" style="left:832px;width:148px">4,738.00</div><div class="c nu" style="left:988px;width:147px">4,738.00</div><div class="c nu" style="left:1143px;width:148px">4,738.00</div><div class="c nu" style="left:1299px;width:147px">0.00</div><div class="c nu" style="left:1454px;width:148px">0.00</div></div>
<div class="row" style="top:341px"><div class="c" style="left:4px;width:42px">5321</div><div class="c" style="left:54px;width:148px"><span class="sx" style="transform:scaleX(1.0013)">27 Aug 2025</span></div><div class="c" style="left:210px;width:147px"><span class="sx" style="transform:scaleX(0.9910)">8.27 Test</span></div><div class="c nu" style="left:832px;width:148px">0.00</div><div class="c nu" style="left:988px;width:147px">0.00</div><div class="c nu" style="left:1143px;width:148px">0.00</div><div class="c nu" style="left:1299px;width:147px">0.00</div><div class="c nu" style="left:1454px;width:148px">0.00</div></div>
<div class="row" style="top:373px"><div class="c" style="left:4px;width:42px">5318</div><div class="c" style="left:54px;width:148px"><span class="sx" style="transform:scaleX(1.0013)">19 Aug 2025</span></div><div class="c" style="left:210px;width:147px"><span class="sx" style="transform:scaleX(0.9842)">Ryan / River Run Test 2</span></div><div class="c nu" style="left:832px;width:148px">547.30</div><div class="c nu" style="left:988px;width:147px">547.30</div><div class="c nu" style="left:1143px;width:148px">547.30</div><div class="c nu" style="left:1299px;width:147px">0.00</div><div class="c nu" style="left:1454px;width:148px">0.00</div></div>
<div class="row" style="top:405px"><div class="c" style="left:4px;width:42px">5317</div><div class="c" style="left:54px;width:148px"><span class="sx" style="transform:scaleX(1.0013)">19 Aug 2025</span></div><div class="c" style="left:210px;width:147px"><span class="sx" style="transform:scaleX(0.9836)">Ryan / River Run Test</span></div><div class="c nu" style="left:832px;width:148px">911.10</div><div class="c nu" style="left:988px;width:147px">0.00</div><div class="c nu" style="left:1143px;width:148px">35.40</div><div class="c nu" style="left:1299px;width:147px">-35.40</div><div class="c nu" style="left:1454px;width:148px">911.10</div></div>
<div class="row" style="top:437px"><div class="c" style="left:4px;width:42px">5315</div><div class="c" style="left:54px;width:148px"><span class="sx" style="transform:scaleX(1.0013)">16 Aug 2025</span></div><div class="c" style="left:210px;width:147px"><span class="sx" style="transform:scaleX(0.9972)">Stanford Test Event</span></div><div class="c nu" style="left:832px;width:148px">0.00</div><div class="c nu" style="left:988px;width:147px">3,000.00</div><div class="c nu" style="left:1143px;width:148px">0.00</div><div class="c nu" style="left:1299px;width:147px">3,000.00</div><div class="c nu" style="left:1454px;width:148px">-3,000.00</div></div>
<div class="row" style="top:469px"><div class="c" style="left:4px;width:42px">5316</div><div class="c" style="left:54px;width:148px"><span class="sx" style="transform:scaleX(1.0013)">09 Aug 2025</span></div><div class="c" style="left:210px;width:147px"><span class="sx" style="transform:scaleX(0.9767)">Ryan / Travis Test</span></div><div class="c nu" style="left:832px;width:148px">306.48</div><div class="c nu" style="left:988px;width:147px">0.00</div><div class="c nu" style="left:1143px;width:148px">0.00</div><div class="c nu" style="left:1299px;width:147px">0.00</div><div class="c nu" style="left:1454px;width:148px">306.48</div></div>
<div class="row" style="top:501px"><div class="c" style="left:4px;width:42px">5313</div><div class="c" style="left:54px;width:148px"><span class="sx" style="transform:scaleX(0.9800)">31 Jul 2025</span></div><div class="c" style="left:210px;width:147px"><span class="sx" style="transform:scaleX(0.9826)">7.31 Check In Test</span></div><div class="c" style="left:365px;width:148px"><span class="sx" style="transform:scaleX(0.9978)">Adam Bailey</span></div><div class="c" style="left:521px;width:147px"><span class="sx" style="transform:scaleX(1.0307)">adam.bailey@clubcaddie.com</span></div><div class="c nu" style="left:676px;width:148px">3135555555</div><div class="c nu" style="left:832px;width:148px">13,000.00</div><div class="c nu" style="left:988px;width:147px">12,040.00</div><div class="c nu" style="left:1143px;width:148px">13,000.00</div><div class="c nu" style="left:1299px;width:147px">0.00</div><div class="c nu" style="left:1454px;width:148px">0.00</div></div>
<div class="row" style="top:533px"><div class="c" style="left:4px;width:42px">5310</div><div class="c" style="left:54px;width:148px"><span class="sx" style="transform:scaleX(0.9942)">11 Jul 2025</span></div><div class="c" style="left:210px;width:147px"><span class="sx" style="transform:scaleX(0.9943)">Ryan / Patrick Test</span></div><div class="c nu" style="left:832px;width:148px">0.00</div><div class="c nu" style="left:988px;width:147px">0.00</div><div class="c nu" style="left:1143px;width:148px">0.00</div><div class="c nu" style="left:1299px;width:147px">0.00</div><div class="c nu" style="left:1454px;width:148px">0.00</div></div>
<div class="row" style="top:565px"><div class="c" style="left:4px;width:42px">5308</div><div class="c" style="left:54px;width:148px"><span class="sx" style="transform:scaleX(0.9942)">11 Jul 2025</span></div><div class="c" style="left:210px;width:147px"><span class="sx" style="transform:scaleX(1.0285)">Wingate Group 120- 7/1</span></div><div class="c" style="left:365px;width:148px"><span class="sx" style="transform:scaleX(1.0205)">Grant Wingate</span></div><div class="c" style="left:521px;width:147px"><span class="sx" style="transform:scaleX(1.0277)">grant@clubcaddie.com</span></div><div class="c nu" style="left:832px;width:148px">30,646.94</div><div class="c nu" style="left:988px;width:147px">30,586.69</div><div class="c nu" style="left:1143px;width:148px">30,646.94</div><div class="c nu" style="left:1299px;width:147px">-60.25</div><div class="c nu" style="left:1454px;width:148px">60.25</div></div>
<div class="row" style="top:597px"><div class="c" style="left:4px;width:42px">5208</div><div class="c" style="left:54px;width:148px"><span class="sx" style="transform:scaleX(0.9834)">03 Jun 2025</span></div><div class="c" style="left:210px;width:147px"><span class="sx" style="transform:scaleX(1.1305)">tnf</span></div><div class="c" style="left:365px;width:148px"><span class="sx" style="transform:scaleX(1.0296)">Mike McCarraher</span></div><div class="c" style="left:521px;width:147px"><span class="sx" style="transform:scaleX(1.0224)">mike@clubcaddie.com</span></div><div class="c nu" style="left:676px;width:148px">1112223332</div><div class="c nu" style="left:832px;width:148px">12,599.49</div><div class="c nu" style="left:988px;width:147px">12,561.50</div><div class="c nu" style="left:1143px;width:148px">12,599.49</div><div class="c nu" style="left:1299px;width:147px">-37.99</div><div class="c nu" style="left:1454px;width:148px">37.99</div></div>
<div class="row" style="top:629px"><div class="c" style="left:4px;width:42px">5267</div><div class="c" style="left:54px;width:148px"><span class="sx" style="transform:scaleX(1.0143)">30 May 2025</span></div><div class="c" style="left:210px;width:147px"><span class="sx" style="transform:scaleX(1.0505)">2 Day Member/Member</span></div><div class="c nu" style="left:832px;width:148px">795.00</div><div class="c nu" style="left:988px;width:147px">800.00</div><div class="c nu" style="left:1143px;width:148px">0.00</div><div class="c nu" style="left:1299px;width:147px">800.00</div><div class="c nu" style="left:1454px;width:148px">-5.00</div></div>
<div class="row" style="top:661px"><div class="c" style="left:4px;width:42px">5258</div><div class="c" style="left:54px;width:148px"><span class="sx" style="transform:scaleX(1.0190)">29 Apr 2025</span></div><div class="c" style="left:210px;width:147px"><span class="sx" style="transform:scaleX(0.9820)">$0 Check in Event</span></div><div class="c" style="left:365px;width:148px"><span class="sx" style="transform:scaleX(0.9978)">Adam Bailey</span></div><div class="c" style="left:521px;width:147px"><span class="sx" style="transform:scaleX(1.0307)">adam.bailey@clubcaddie.com</span></div><div class="c nu" style="left:676px;width:148px">3135555555</div><div class="c nu" style="left:832px;width:148px">0.00</div><div class="c nu" style="left:988px;width:147px">100.00</div><div class="c nu" style="left:1143px;width:148px">0.00</div><div class="c nu" style="left:1299px;width:147px">100.00</div><div class="c nu" style="left:1454px;width:148px">-100.00</div></div>
<div class="row" style="top:693px"><div class="c" style="left:4px;width:42px">5223</div><div class="c" style="left:54px;width:148px"><span class="sx" style="transform:scaleX(0.9800)">22 Feb 2025</span></div><div class="c" style="left:210px;width:147px"><span class="sx" style="transform:scaleX(0.9673)">Stu Test</span></div><div class="c" style="left:365px;width:148px"><span class="sx" style="transform:scaleX(1.0299)">Stuart Proctor</span></div><div class="c" style="left:521px;width:147px"><span class="sx" style="transform:scaleX(1.0389)">proctor.stu@gmail.com</span></div><div class="c nu" style="left:676px;width:148px">4078371329</div><div class="c nu" style="left:832px;width:148px">14,290.00</div><div class="c nu" style="left:988px;width:147px">0.00</div><div class="c nu" style="left:1143px;width:148px">0.00</div><div class="c nu" style="left:1299px;width:147px">0.00</div><div class="c nu" style="left:1454px;width:148px">14,290.00</div></div>
<div class="row" style="top:725px"><div class="c" style="left:4px;width:42px">5207</div><div class="c" style="left:54px;width:148px"><span class="sx" style="transform:scaleX(0.9725)">15 Jan 2025</span></div><div class="c" style="left:210px;width:147px"><span class="sx" style="transform:scaleX(1.0428)">1/15 Golf Outing</span></div><div class="c nu" style="left:832px;width:148px">171.94</div><div class="c nu" style="left:988px;width:147px">171.94</div><div class="c nu" style="left:1143px;width:148px">171.94</div><div class="c nu" style="left:1299px;width:147px">0.00</div><div class="c nu" style="left:1454px;width:148px">0.00</div></div>
<div class="row" style="top:757px"><div class="c" style="left:4px;width:42px">5205</div><div class="c" style="left:54px;width:148px"><span class="sx" style="transform:scaleX(0.9725)">10 Jan 2025</span></div><div class="c" style="left:210px;width:147px"><span class="sx" style="transform:scaleX(1.0206)">January Tournament</span></div><div class="c nu" style="left:832px;width:148px">301.00</div><div class="c nu" style="left:988px;width:147px">301.00</div><div class="c nu" style="left:1143px;width:148px">301.00</div><div class="c nu" style="left:1299px;width:147px">0.00</div><div class="c nu" style="left:1454px;width:148px">0.00</div></div>
<div class="row" style="top:789px"><div class="c" style="left:4px;width:42px">5143</div><div class="c" style="left:54px;width:148px"><span class="sx" style="transform:scaleX(0.9968)">11 Dec 2024</span></div><div class="c" style="left:210px;width:147px"><span class="sx" style="transform:scaleX(1.0058)">Club Caddie Golf Outing</span></div><div class="c" style="left:365px;width:148px"><span class="sx" style="transform:scaleX(0.9978)">Adam Bailey</span></div><div class="c" style="left:521px;width:147px"><span class="sx" style="transform:scaleX(1.0307)">adam.bailey@clubcaddie.com</span></div><div class="c nu" style="left:676px;width:148px">3135555555</div><div class="c nu" style="left:832px;width:148px">6,362.80</div><div class="c nu" style="left:988px;width:147px">6,526.00</div><div class="c nu" style="left:1143px;width:148px">0.00</div><div class="c nu" style="left:1299px;width:147px">6,526.00</div><div class="c nu" style="left:1454px;width:148px">-163.20</div></div>
<div class="row" style="top:821px"><div class="c" style="left:4px;width:42px">5193</div><div class="c" style="left:54px;width:148px"><span class="sx" style="transform:scaleX(0.9838)">09 Dec 2024</span></div><div class="c" style="left:210px;width:147px"><span class="sx" style="transform:scaleX(1.0022)">Event Reporting Test</span></div><div class="c" style="left:365px;width:148px"><span class="sx" style="transform:scaleX(1.0146)">Michael Rawlins</span></div><div class="c" style="left:521px;width:147px"><span class="sx" style="transform:scaleX(1.0184)">michael@clubcaddie.com</span></div><div class="c nu" style="left:676px;width:148px">2622064015</div><div class="c nu" style="left:832px;width:148px">10,015.40</div><div class="c nu" style="left:988px;width:147px">10,000.40</div><div class="c nu" style="left:1143px;width:148px">10,015.40</div><div class="c nu" style="left:1299px;width:147px">-15.00</div><div class="c nu" style="left:1454px;width:148px">15.00</div></div>
<div class="row" style="top:853px"><div class="c" style="left:4px;width:42px">5182</div><div class="c" style="left:54px;width:148px"><span class="sx" style="transform:scaleX(1.0037)">20 Nov 2024</span></div><div class="c" style="left:210px;width:147px"><span class="sx" style="transform:scaleX(0.9509)">Ryan Test</span></div><div class="c nu" style="left:832px;width:148px">1,700.00</div><div class="c nu" style="left:988px;width:147px">1,700.00</div><div class="c nu" style="left:1143px;width:148px">1,700.00</div><div class="c nu" style="left:1299px;width:147px">0.00</div><div class="c nu" style="left:1454px;width:148px">0.00</div></div>
<svg class="abs" style="left:1860px;top:245px" width="30" height="648" viewBox="1860 245 30 648" fill="#0a0a0a"><ellipse cx="1874.5" cy="255.4" rx="1.7" ry="1.15"/><ellipse cx="1874.5" cy="260.4" rx="1.7" ry="1.15"/><ellipse cx="1874.5" cy="265.3" rx="1.7" ry="1.15"/><ellipse cx="1874.5" cy="287.4" rx="1.7" ry="1.15"/><ellipse cx="1874.5" cy="292.4" rx="1.7" ry="1.15"/><ellipse cx="1874.5" cy="297.3" rx="1.7" ry="1.15"/><ellipse cx="1874.5" cy="319.4" rx="1.7" ry="1.15"/><ellipse cx="1874.5" cy="324.4" rx="1.7" ry="1.15"/><ellipse cx="1874.5" cy="329.3" rx="1.7" ry="1.15"/><ellipse cx="1874.5" cy="351.4" rx="1.7" ry="1.15"/><ellipse cx="1874.5" cy="356.4" rx="1.7" ry="1.15"/><ellipse cx="1874.5" cy="361.3" rx="1.7" ry="1.15"/><ellipse cx="1874.5" cy="383.4" rx="1.7" ry="1.15"/><ellipse cx="1874.5" cy="388.4" rx="1.7" ry="1.15"/><ellipse cx="1874.5" cy="393.3" rx="1.7" ry="1.15"/><ellipse cx="1874.5" cy="415.4" rx="1.7" ry="1.15"/><ellipse cx="1874.5" cy="420.4" rx="1.7" ry="1.15"/><ellipse cx="1874.5" cy="425.3" rx="1.7" ry="1.15"/><ellipse cx="1874.5" cy="447.4" rx="1.7" ry="1.15"/><ellipse cx="1874.5" cy="452.4" rx="1.7" ry="1.15"/><ellipse cx="1874.5" cy="457.3" rx="1.7" ry="1.15"/><ellipse cx="1874.5" cy="479.4" rx="1.7" ry="1.15"/><ellipse cx="1874.5" cy="484.4" rx="1.7" ry="1.15"/><ellipse cx="1874.5" cy="489.3" rx="1.7" ry="1.15"/><ellipse cx="1874.5" cy="511.4" rx="1.7" ry="1.15"/><ellipse cx="1874.5" cy="516.4" rx="1.7" ry="1.15"/><ellipse cx="1874.5" cy="521.3" rx="1.7" ry="1.15"/><ellipse cx="1874.5" cy="543.4" rx="1.7" ry="1.15"/><ellipse cx="1874.5" cy="548.4" rx="1.7" ry="1.15"/><ellipse cx="1874.5" cy="553.3" rx="1.7" ry="1.15"/><ellipse cx="1874.5" cy="575.4" rx="1.7" ry="1.15"/><ellipse cx="1874.5" cy="580.4" rx="1.7" ry="1.15"/><ellipse cx="1874.5" cy="585.3" rx="1.7" ry="1.15"/><ellipse cx="1874.5" cy="607.4" rx="1.7" ry="1.15"/><ellipse cx="1874.5" cy="612.4" rx="1.7" ry="1.15"/><ellipse cx="1874.5" cy="617.3" rx="1.7" ry="1.15"/><ellipse cx="1874.5" cy="639.4" rx="1.7" ry="1.15"/><ellipse cx="1874.5" cy="644.4" rx="1.7" ry="1.15"/><ellipse cx="1874.5" cy="649.3" rx="1.7" ry="1.15"/><ellipse cx="1874.5" cy="671.4" rx="1.7" ry="1.15"/><ellipse cx="1874.5" cy="676.4" rx="1.7" ry="1.15"/><ellipse cx="1874.5" cy="681.3" rx="1.7" ry="1.15"/><ellipse cx="1874.5" cy="703.4" rx="1.7" ry="1.15"/><ellipse cx="1874.5" cy="708.4" rx="1.7" ry="1.15"/><ellipse cx="1874.5" cy="713.3" rx="1.7" ry="1.15"/><ellipse cx="1874.5" cy="735.4" rx="1.7" ry="1.15"/><ellipse cx="1874.5" cy="740.4" rx="1.7" ry="1.15"/><ellipse cx="1874.5" cy="745.3" rx="1.7" ry="1.15"/><ellipse cx="1874.5" cy="767.4" rx="1.7" ry="1.15"/><ellipse cx="1874.5" cy="772.4" rx="1.7" ry="1.15"/><ellipse cx="1874.5" cy="777.3" rx="1.7" ry="1.15"/><ellipse cx="1874.5" cy="799.4" rx="1.7" ry="1.15"/><ellipse cx="1874.5" cy="804.4" rx="1.7" ry="1.15"/><ellipse cx="1874.5" cy="809.3" rx="1.7" ry="1.15"/><ellipse cx="1874.5" cy="831.4" rx="1.7" ry="1.15"/><ellipse cx="1874.5" cy="836.4" rx="1.7" ry="1.15"/><ellipse cx="1874.5" cy="841.3" rx="1.7" ry="1.15"/><ellipse cx="1874.5" cy="863.4" rx="1.7" ry="1.15"/><ellipse cx="1874.5" cy="868.4" rx="1.7" ry="1.15"/><ellipse cx="1874.5" cy="873.3" rx="1.7" ry="1.15"/></svg>
<div class="vl" style="left:285px"></div>
<div class="vl" style="left:441px"></div>
<div class="vl" style="left:596px"></div>
<div class="vl" style="left:752px"></div>
<div class="vl" style="left:907px"></div>
<div class="vl" style="left:1063px"></div>
<div class="vl" style="left:1219px"></div>
<div class="vl" style="left:1374px"></div>
<div class="vl" style="left:1530px"></div>
<div class="vl" style="left:1685px"></div>
<div class="vl" style="left:1841px"></div>
<div class="vl" style="left:1903px"></div>
<div class="abs" style="left:235px;top:214px;width:1px;height:680px;background:#a39c96"></div>
<div class="abs" style="left:236px;top:214px;width:1px;height:680px;background:#1a70c8"></div>
<div class="abs" style="left:237px;top:245px;width:4px;height:648px;background:#f3f3f3;mix-blend-mode:multiply"></div>
<div class="abs" style="left:235px;top:893px;width:1684px;height:1px;background:#a8a8a8"></div>
<div class="abs" style="left:1905px;top:214px;width:14px;height:284px;background:#aaa8a8;border-radius:6px 0 0 6px"></div>

<svg class="abs" style="left:1040px;top:90px;overflow:visible" width="100" height="80" viewBox="1040 90 100 80">
<defs><filter id="sh" x="-30%" y="-30%" width="170%" height="170%"><feDropShadow dx="2.5" dy="3" stdDeviation="2.2" flood-color="#000" flood-opacity="0.45"/></filter></defs>
<g filter="url(#sh)"><path d="M1068.75 145.4 L1089 123" stroke="#f64246" stroke-width="7.5" stroke-linecap="round" fill="none"/><path d="M1103.75 106 L1079.7 115.9 L1096.6 131.9 Z" fill="#f64246"/></g>
</svg>
<svg class="abs" style="left:170px;top:240px;overflow:visible" width="70" height="100" viewBox="170 240 70 100">
<g filter="url(#sh)"><path d="M215 259 L207 293" stroke="#f64246" stroke-width="7.4" stroke-linecap="round" fill="none"/><path d="M200 317.4 L194.6 292.4 L217.4 297.4 Z" fill="#f64246"/></g>
</svg>

</body></html>
